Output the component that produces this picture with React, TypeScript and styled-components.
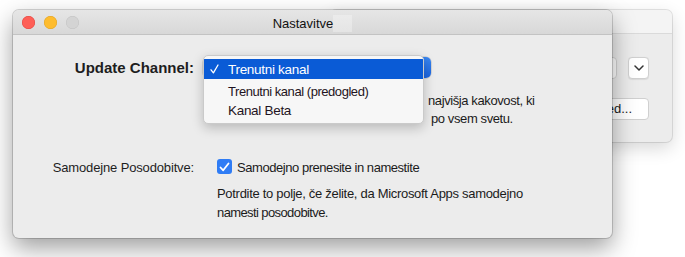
import React from 'react';
import styled, { createGlobalStyle } from 'styled-components';

const Global = createGlobalStyle`
  html, body { margin: 0; padding: 0; background: #ffffff; }
  body { font-family: "Liberation Sans", Arial, sans-serif; color: #1b1b1b; }
  * { box-sizing: border-box; }
`;

const Desktop = styled.div`
  position: relative;
  width: 685px;
  height: 257px;
  overflow: hidden;
  background: #ffffff;
`;

const BackWindow = styled.div`
  position: absolute;
  left: 330px;
  top: 10px;
  width: 342px;
  height: 132px;
  background: #ececec;
  border-radius: 6px;
  box-shadow: 0 0 0 1px rgba(0, 0, 0, 0.1), 0 6px 18px rgba(0, 0, 0, 0.16);
  display: flex;
  flex-direction: column;
  overflow: hidden;
`;

const BackTitleBar = styled.div`
  height: 24px;
  background: #f4f4f4;
  border-bottom: 1px solid #dadada;
`;

const BackBody = styled.div`
  display: flex;
  flex-direction: column;
  align-items: flex-end;
  gap: 19px;
  padding: 23px 23px 0 0;
`;

const BackRow = styled.div`
  display: flex;
  gap: 11px;
`;

const Field = styled.div`
  width: 150px;
  height: 22px;
  background: #ffffff;
  border: 1px solid #d3d3d3;
  border-radius: 4px;
`;

const SquareButton = styled.div`
  width: 21px;
  height: 22px;
  background: #ffffff;
  border: 1px solid #d0d0d0;
  border-radius: 4px;
  display: flex;
  align-items: center;
  justify-content: center;
  box-shadow: 0 0.5px 1px rgba(0, 0, 0, 0.08);
`;

const PushButton = styled.div`
  height: 22px;
  padding: 0 16px 0 14px;
  background: #ffffff;
  border: 1px solid #d0d0d0;
  border-radius: 4px;
  font-size: 13px;
  line-height: 20px;
  color: #1b1b1b;
  white-space: nowrap;
`;

const MainWindow = styled.div`
  position: absolute;
  left: 13px;
  top: 10px;
  width: 599px;
  height: 228px;
  background: #ececec;
  border-radius: 6px;
  box-shadow: 0 0 0 1px rgba(0, 0, 0, 0.16), 0 10px 24px rgba(0, 0, 0, 0.38);
  display: flex;
  flex-direction: column;
`;

const TitleBar = styled.div`
  height: 25px;
  display: grid;
  grid-template-columns: 1fr auto 1fr;
  align-items: center;
  background: linear-gradient(#e6e6e6, #d8d8d8);
  border-bottom: 1px solid #c3c3c3;
  border-radius: 6px 6px 0 0;
`;

const Lights = styled.div`
  display: flex;
  gap: 9px;
  padding-left: 9px;
  padding-top: 1px;
`;

const Light = styled.span<{ $c: string; $b: string }>`
  width: 13px;
  height: 13px;
  border-radius: 50%;
  background: ${(p) => p.$c};
  box-shadow: inset 0 0 0 0.5px ${(p) => p.$b};
`;

const Title = styled.div`
  font-size: 13px;
  color: #111;
  padding-right: 19px;
  margin-top: 3px;
  line-height: 17px;
  background: linear-gradient(90deg, transparent 60px, rgba(255, 255, 255, 0.3) 60px);
`;

const Content = styled.div`
  display: grid;
  grid-template-columns: 181px 1fr;
  column-gap: 9px;
  padding-top: 22px;
`;

const Label = styled.div<{ $bold?: boolean }>`
  text-align: right;
  font-size: ${(p) => (p.$bold ? '15px' : '13px')};
  font-weight: ${(p) => (p.$bold ? 700 : 400)};
  letter-spacing: ${(p) => (p.$bold ? '0' : '-0.15px')};
  color: #1e1e1e;
  line-height: 18px;
  align-self: ${(p) => (p.$bold ? 'center' : 'start')};
`;

const PopupWrap = styled.div`
  position: relative;
  width: 228px;
  height: 21px;
`;

const PopupButton = styled.div`
  width: 228px;
  height: 21px;
  background: #ffffff;
  border-radius: 5px;
  box-shadow: 0 0 0 0.5px rgba(0, 0, 0, 0.2);
  display: flex;
  justify-content: flex-end;
`;

const PopupArrows = styled.div`
  width: 18px;
  height: 21px;
  border-radius: 0 5px 5px 0;
  background: linear-gradient(#3a86f0, #1a64e0);
`;

const Menu = styled.div`
  position: absolute;
  left: 0;
  top: -2px;
  width: 221px;
  height: 69px;
  background: #f7f7f7;
  border-radius: 5px;
  border: 1px solid #cacaca;
  box-shadow: 0 4px 12px rgba(0, 0, 0, 0.22);
  padding-top: 3px;
  display: flex;
  flex-direction: column;
  overflow: hidden;
`;

const MenuItem = styled.div<{ $active?: boolean; $tight?: boolean }>`
  position: relative;
  height: ${(p) => (p.$active ? '20px' : '19px')};
  margin-bottom: ${(p) => (p.$active ? '3px' : '0')};
  padding-left: 24px;
  display: flex;
  align-items: center;
  background: ${(p) => (p.$active ? '#0a5bd6' : 'transparent')};
  color: ${(p) => (p.$active ? '#ffffff' : '#1f1422')};
  font-size: ${(p) => (p.$tight ? '13px' : '13.5px')};
  letter-spacing: ${(p) => (p.$tight ? '-0.45px' : '-0.3px')};
  white-space: nowrap;
`;

const Check = styled.svg`
  position: absolute;
  left: 6px;
  top: 5px;
`;

const ChannelNote = styled.div`
  grid-column: 2;
  margin-top: 14px;
  padding-left: 225px;
  font-size: 13px;
  line-height: 18px;
  letter-spacing: -0.4px;
  color: #1b1b1b;
  white-space: nowrap;
`;

const NoteLine = styled.div<{ $indent?: number }>`
  padding-left: ${(p) => p.$indent ?? 0}px;
`;

const Spacer = styled.div`
  grid-column: 1 / -1;
  height: 31px;
`;

const OptionColumn = styled.div`
  display: flex;
  flex-direction: column;
  padding-left: 14px;
`;

const CheckRow = styled.label`
  display: flex;
  align-items: center;
  gap: 5px;
  font-size: 13px;
  letter-spacing: -0.45px;
  line-height: 18px;
  color: #1b1b1b;
`;

const CheckBox = styled.span`
  width: 15px;
  height: 15px;
  border-radius: 3px;
  background: #2f7cf5;
  display: flex;
  align-items: center;
  justify-content: center;
  margin-top: -3px;
`;

const Hint = styled.div`
  margin-top: 7px;
  font-size: 13px;
  line-height: 19px;
  color: #1b1b1b;
  white-space: nowrap;
`;

const HintLine = styled.div<{ $squeeze?: boolean }>`
  letter-spacing: ${(p) => (p.$squeeze ? '-0.6px' : '-0.3px')};
`;

export default function App() {
  return (
    <>
      <Global />
      <Desktop>
        <BackWindow>
          <BackTitleBar />
          <BackBody>
            <BackRow>
              <Field />
              <SquareButton>
                <svg width="10" height="6" viewBox="0 0 10 6">
                  <path d="M1 1 L5 5 L9 1" fill="none" stroke="#333" strokeWidth="1.5" strokeLinecap="round" strokeLinejoin="round" />
                </svg>
              </SquareButton>
            </BackRow>
            <PushButton>Advanced...</PushButton>
          </BackBody>
        </BackWindow>

        <MainWindow>
          <TitleBar>
            <Lights>
              <Light $c="#fe5f57" $b="#e0443e" />
              <Light $c="#febc2e" $b="#dea123" />
              <Light $c="#d4d4d4" $b="#c2c2c2" />
            </Lights>
            <Title>Nastavitve</Title>
            <div />
          </TitleBar>
          <Content>
            <Label $bold>Update Channel:</Label>
            <PopupWrap>
              <PopupButton>
                <PopupArrows />
              </PopupButton>
              <Menu>
                <MenuItem $active>
                  <Check width="9" height="10" viewBox="0 0 9 10">
                    <path d="M1 5.8 L3.4 8.8 L8 1" fill="none" stroke="#fff" strokeWidth="1.3" strokeLinecap="round" strokeLinejoin="round" />
                  </Check>
                  Trenutni kanal
                </MenuItem>
                <MenuItem $tight>Trenutni kanal (predogled)</MenuItem>
                <MenuItem>Kanal Beta</MenuItem>
              </Menu>
            </PopupWrap>
            <ChannelNote>
              <NoteLine>najvišja kakovost, ki</NoteLine>
              <NoteLine $indent={3}>po vsem svetu.</NoteLine>
            </ChannelNote>
            <Spacer />
            <Label>Samodejne Posodobitve:</Label>
            <OptionColumn>
              <CheckRow>
                <CheckBox>
                  <svg width="11" height="10" viewBox="0 0 11 10">
                    <path d="M1.5 5.5 L4.2 8.3 L9.5 1.5" fill="none" stroke="#fff" strokeWidth="1.8" strokeLinecap="round" strokeLinejoin="round" />
                  </svg>
                </CheckBox>
                Samodejno prenesite in namestite
              </CheckRow>
              <Hint>
                <HintLine>Potrdite to polje, če želite, da Microsoft Apps samodejno</HintLine>
                <HintLine $squeeze>namesti posodobitve.</HintLine>
              </Hint>
            </OptionColumn>
          </Content>
        </MainWindow>
      </Desktop>
    </>
  );
}
